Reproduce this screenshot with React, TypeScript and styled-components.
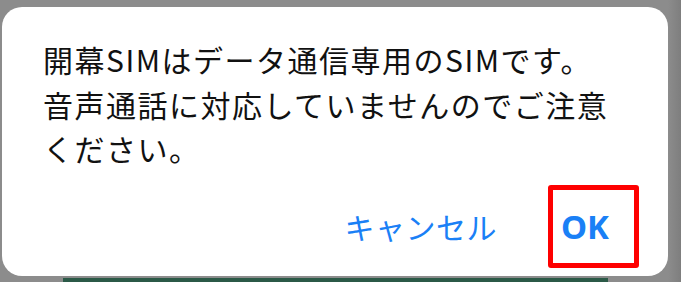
import React from "react";
import styled, { createGlobalStyle } from "styled-components";

const Global = createGlobalStyle`
  html, body { margin: 0; padding: 0; background: #8a8a8a; }
  body { width: 681px; height: 282px; overflow: hidden; }
`;

const Screen = styled.div`
  width: 681px;
  height: 282px;
  padding: 7px 0 0 2px;
  box-sizing: border-box;
  display: flex;
  flex-direction: column;
  background: linear-gradient(to right, #8c8c8c 0, #8c8c8c 668px, #7e7e7e 681px);
`;

const Dialog = styled.div`
  width: 666px;
  height: 270px;
  background: #ffffff;
  border-radius: 20px;
  box-sizing: border-box;
  padding: 30px 29px 0 41px;
  display: flex;
  flex-direction: column;
`;

const Message = styled.p`
  margin: 0;
  font-family: "Noto Sans CJK JP", "Noto Sans", sans-serif;
  font-size: 30px;
  letter-spacing: 1.5px;
  line-height: 44.5px;
  color: #111111;
`;

const Actions = styled.div`
  margin-top: 14px;
  display: flex;
  justify-content: flex-end;
  align-items: center;
  gap: 51px;
`;

const CancelButton = styled.button`
  border: none;
  background: none;
  padding: 0;
  font-family: "Noto Sans CJK JP", sans-serif;
  font-size: 30px;
  letter-spacing: 0.5px;
  line-height: 40px;
  color: #1a80f6;
`;

const HighlightBox = styled.div`
  width: 91px;
  height: 83px;
  box-sizing: border-box;
  border: 5px solid #fe0000;
  border-radius: 3px;
  display: flex;
  align-items: center;
  padding: 2px 0 0 8px;
`;

const OkButton = styled.button`
  border: none;
  background: none;
  padding: 0;
  font-family: "Noto Sans", Roboto, sans-serif;
  font-weight: 700;
  font-size: 33px;
  line-height: 40px;
  color: #1a80f6;
`;

const BottomStrip = styled.div`
  margin: 2px 0 0 61px;
  width: 545px;
  height: 4px;
  background: #2b5947;
`;

export default function App() {
  return (
    <>
      <Global />
      <Screen>
        <Dialog>
          <Message>
            開幕SIMはデータ通信専用のSIMです。
            <br />
            音声通話に対応していませんのでご注意
            <br />
            ください。
          </Message>
          <Actions>
            <CancelButton>キャンセル</CancelButton>
            <HighlightBox>
              <OkButton>OK</OkButton>
            </HighlightBox>
          </Actions>
        </Dialog>
        <BottomStrip />
      </Screen>
    </>
  );
}
